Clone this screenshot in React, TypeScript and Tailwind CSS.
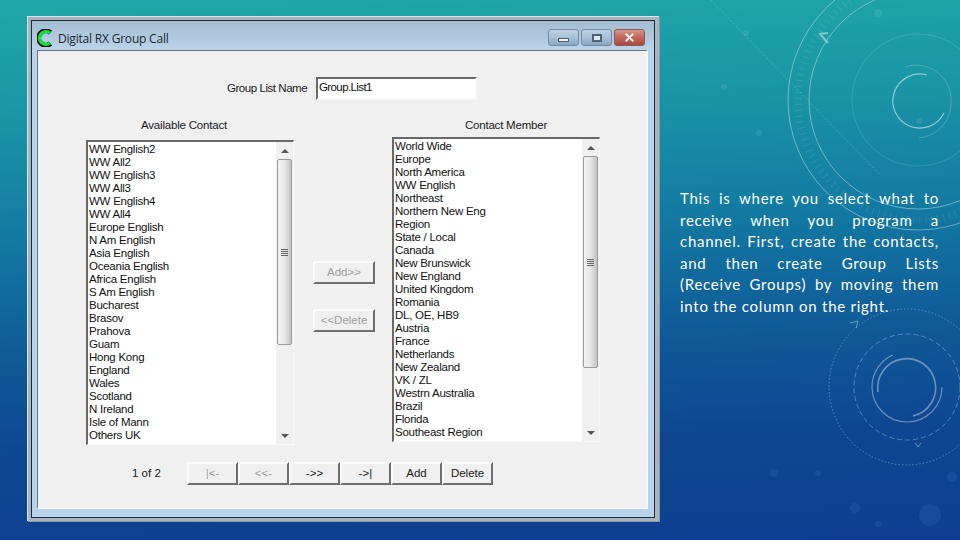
import { X } from 'lucide-react';

const AVAILABLE = [
  'WW English2', 'WW All2', 'WW English3', 'WW All3', 'WW English4', 'WW All4', 'Europe English',
  'N Am English', 'Asia English', 'Oceania English', 'Africa English', 'S Am English', 'Bucharest',
  'Brasov', 'Prahova', 'Guam', 'Hong Kong', 'England', 'Wales', 'Scotland', 'N Ireland',
  'Isle of Mann', 'Others UK', 'Austin Bay',
];

const MEMBERS = [
  'World Wide', 'Europe', 'North America', 'WW English', 'Northeast', 'Northern New Eng', 'Region',
  'State / Local', 'Canada', 'New Brunswick', 'New England', 'United Kingdom', 'Romania',
  'DL, OE, HB9', 'Austria', 'France', 'Netherlands', 'New Zealand', 'VK / ZL', 'Westrn Australia',
  'Brazil', 'Florida', 'Southeast Region', 'Midwest Region',
];

const NAV = [
  { label: '|<-', off: true },
  { label: '<<-', off: true },
  { label: '->>', off: false },
  { label: '->|', off: false },
  { label: 'Add', off: false },
  { label: 'Delete', off: false },
];

const UI_FONT = "font-['Liberation_Sans',Arial,sans-serif]";

function Backdrop() {
  return (
    <svg className="absolute inset-0 pointer-events-none" width="960" height="540" viewBox="0 0 960 540" fill="none">
      <g stroke="#bfe6ea" strokeOpacity="0.5">
        <circle cx="918" cy="100" r="130" strokeWidth="1" />
        <circle cx="918" cy="100" r="109" strokeWidth="1" />
        <circle cx="918" cy="100" r="66" strokeWidth="0.6" strokeOpacity="0.3" />
        <path d="M927 75a27 27 0 1 0 17 38" strokeWidth="1.2" strokeOpacity="0.7" />
        <path d="M905 67a35 35 0 0 1 46 36a35 35 0 0 1-32 35" strokeWidth="0.7" strokeOpacity="0.4" />
        <path d="M711 0L880 175" strokeWidth="0.7" strokeDasharray="2 2" strokeOpacity="0.35" />
        <path d="M820 34l8 9M819 34l9-1" strokeWidth="2" strokeOpacity="0.6" />
        <circle cx="918" cy="100" r="120" strokeWidth="7" strokeDasharray="1 5" strokeOpacity="0.14" />
      </g>
      <g stroke="#c3d6ea" strokeOpacity="0.5">
        <circle cx="907" cy="387" r="35" strokeWidth="1.2" strokeDasharray="150 70" />
        <path d="M878 392a29 29 0 1 1 35 24" strokeWidth="1.6" />
        <circle cx="907" cy="387" r="53" strokeWidth="0.8" strokeDasharray="5 3" />
        <circle cx="907" cy="387" r="78" strokeWidth="0.8" strokeDasharray="1.5 2" />
        <path d="M915 443l3 4 3-4M850 323l8-2-2 7" strokeWidth="1" />
      </g>
      <g fill="#9fdce6" fillOpacity="0.14">
        <circle cx="878" cy="13" r="4" />
        <circle cx="746" cy="33" r="3" />
        <circle cx="724" cy="87" r="3" />
        <circle cx="759" cy="133" r="3" />
        <circle cx="919" cy="121" r="3" />
      </g>
      <g fill="#4d86d6" fillOpacity="0.16">
        <circle cx="774" cy="473" r="4" />
        <circle cx="818" cy="473" r="3" />
        <circle cx="855" cy="508" r="5" />
        <circle cx="930" cy="515" r="11" />
        <circle cx="952" cy="477" r="5" />
        <circle cx="878" cy="524" r="3" />
      </g>
    </svg>
  );
}

function ScrollBar({ thumb }: { thumb: number }) {
  return (
    <div className="w-[17px] h-full bg-[#f0f0f0] flex flex-col items-center">
      <div className="h-[17px] w-full flex items-center justify-center shrink-0">
        <div className="w-0 h-0 border-x-[4px] border-x-transparent border-b-[4px] border-b-[#555555]" />
      </div>
      <div
        className="w-[15px] shrink-0 rounded-[2px] border border-[#9b9b9b] bg-[linear-gradient(90deg,#f3f3f3,#e6e6e6_50%,#c4c4c4)] flex flex-col items-center justify-center gap-[1px]"
        style={{ height: thumb }}
      >
        <div className="w-[7px] h-px bg-[#666666]" />
        <div className="w-[7px] h-px bg-[#666666]" />
        <div className="w-[7px] h-px bg-[#666666]" />
        <div className="w-[7px] h-px bg-[#666666]" />
      </div>
      <div className="flex-1" />
      <div className="h-[17px] w-full flex items-center justify-center shrink-0">
        <div className="w-0 h-0 border-x-[4px] border-x-transparent border-t-[4px] border-t-[#555555]" />
      </div>
    </div>
  );
}

function ListBox({ items, thumb }: { items: string[]; thumb: number }) {
  return (
    <div className="w-[208px] h-[305px] flex border-t-2 border-l-2 border-r border-b border-t-[#696969] border-l-[#696969] border-b-[#f8f8f8] border-r-[#f8f8f8] bg-white overflow-hidden">
      <div className="flex-1 pl-[1px] overflow-hidden">
        {items.map((item) => (
          <div key={item} className="h-[13px] leading-[15px] text-[11.5px] tracking-[-0.25px] text-[#111111] whitespace-nowrap">
            {item}
          </div>
        ))}
      </div>
      <ScrollBar thumb={thumb} />
    </div>
  );
}

function RaisedButton({ label, off, width }: { label: string; off: boolean; width: string }) {
  return (
    <div
      className={`${width} h-[23px] flex items-center justify-center text-[11.5px] bg-[#f0f0f0] border-2 border-t-[#fbfbfb] border-l-[#fbfbfb] border-b-[#6e6e6e] border-r-[#6e6e6e] ${off ? 'text-[#a0a0a0]' : 'text-[#1a1a1a]'}`}
    >
      {label}
    </div>
  );
}

function TitleBar() {
  return (
    <div className="h-[29px] flex items-start pl-[5px] pr-[9px] bg-[linear-gradient(180deg,#a3bcd1,#bcd4eb)]">
      <svg width="18" height="18" viewBox="0 0 18 18" fill="none" className="shrink-0 mt-[8px]">
        <path d="M13.5 3.5A7.2 7.2 0 1 0 13.5 14.5" stroke="#111111" strokeWidth="5" />
        <path d="M13 4A6.4 6.4 0 1 0 13 14" stroke="#0fe23a" strokeWidth="3.4" />
      </svg>
      <span className="ml-[3px] mt-[9px] text-[12px] leading-[17px] tracking-[-0.2px] text-[#1c2630] font-['Open_Sans',sans-serif]">Digital RX Group Call</span>
      <div className="ml-auto flex gap-[2px] mt-[8px]">
        <div className="w-[31px] h-[17px] rounded-[3px] border border-[#6f8ba5] bg-[linear-gradient(180deg,#bed1e2,#a9c0d6_50%,#8aa6c0)] flex items-end justify-center pb-[3px]">
          <div className="w-[11px] h-[4px] border border-[#4f6478] bg-[#eef3f8]" />
        </div>
        <div className="w-[31px] h-[17px] rounded-[3px] border border-[#6f8ba5] bg-[linear-gradient(180deg,#bed1e2,#a9c0d6_50%,#8aa6c0)] flex items-center justify-center">
          <div className="w-[10px] h-[8px] border-2 border-[#4f6478] bg-[#dfe8f0]" />
        </div>
        <div className="w-[31px] h-[17px] rounded-[3px] border border-[#8c5a50] bg-[linear-gradient(180deg,#d4978a,#c0675a_50%,#a84a3c)] flex items-center justify-center">
          <X size={13} strokeWidth={3.5} className="text-[#f0f0f0]" />
        </div>
      </div>
    </div>
  );
}

export default function App() {
  return (
    <div className="relative w-[960px] h-[540px] overflow-hidden flex items-start bg-[linear-gradient(178deg,#1fa8a8_0%,#1a93a5_22%,#1279a2_42%,#0f5a98_62%,#0e4691_80%,#0f3e90_100%)]">
      <Backdrop />

      <div className="relative mt-[16px] ml-[27px] w-[632px] h-[505px] pt-[3px] pl-[3px] pr-[4px] pb-[3px] bg-[#a9b5bc] border-t border-l border-[#d8e8ea] shadow-[1px_1px_0_#8d98a3]">
        <div className={`h-full border border-[#1c2b38] bg-[#b9d3ec] flex flex-col ${UI_FONT}`}>
          <TitleBar />
          <div className="ml-[5px] w-[611px] h-[459px] bg-[#f0f0f0] border-t border-l border-t-[#6c7680] border-l-[#6c7680] border-b-2 border-r-2 border-b-[#f4f8fb] border-r-[#f4f8fb]">
            <div className="flex items-center pt-[26px] pl-[189px]">
              <span className="w-[89px] text-[11.5px] tracking-[-0.45px] whitespace-nowrap text-[#1a1a1a]">Group List Name</span>
              <div className="w-[161px] h-[23px] pl-[1px] pt-[1px] bg-white border-2 border-t-[#696969] border-l-[#696969] border-b-[#f8f8f8] border-r-[#f8f8f8] text-[11.5px] tracking-[-0.6px] leading-[15px] text-[#111111]">
                Group.List1
              </div>
            </div>

            <div className="flex items-start pl-[48px] mt-[18px]">
              <div className="w-[208px] flex flex-col">
                <div className="h-[14px] leading-[14px] mb-[8px] text-[11.5px] tracking-[-0.2px] text-[#1a1a1a] text-center pr-[12px]">Available Contact</div>
                <ListBox items={AVAILABLE} thumb={186} />
              </div>
              <div className="w-[98px] pl-[19px] pt-[143px] flex flex-col gap-[25px]">
                <RaisedButton label="Add>>" off width="w-[62px]" />
                <RaisedButton label="<<Delete" off width="w-[62px]" />
              </div>
              <div className="w-[208px] flex flex-col">
                <div className="h-[14px] leading-[14px] mb-[5px] text-[11.5px] tracking-[-0.2px] text-[#1a1a1a] text-center pl-[20px]">Contact Member</div>
                <ListBox items={MEMBERS} thumb={212} />
              </div>
            </div>

            <div className="flex items-center pl-[94px] mt-[17px]">
              <span className="w-[55px] text-[11.5px] text-[#1a1a1a]">1 of 2</span>
              {NAV.map((b) => (
                <RaisedButton key={b.label} label={b.label} off={b.off} width="w-[51px]" />
              ))}
            </div>
          </div>
        </div>
      </div>

      <p className="relative mt-[188px] ml-[21px] w-[259px] text-justify text-white text-[15px] leading-[21.6px] tracking-[0.75px] font-['Lato',sans-serif]">
        This is where you select what to receive when you program a channel. First, create the contacts, and then create Group Lists (Receive Groups) by moving them into the column on the right.
      </p>
    </div>
  );
}
